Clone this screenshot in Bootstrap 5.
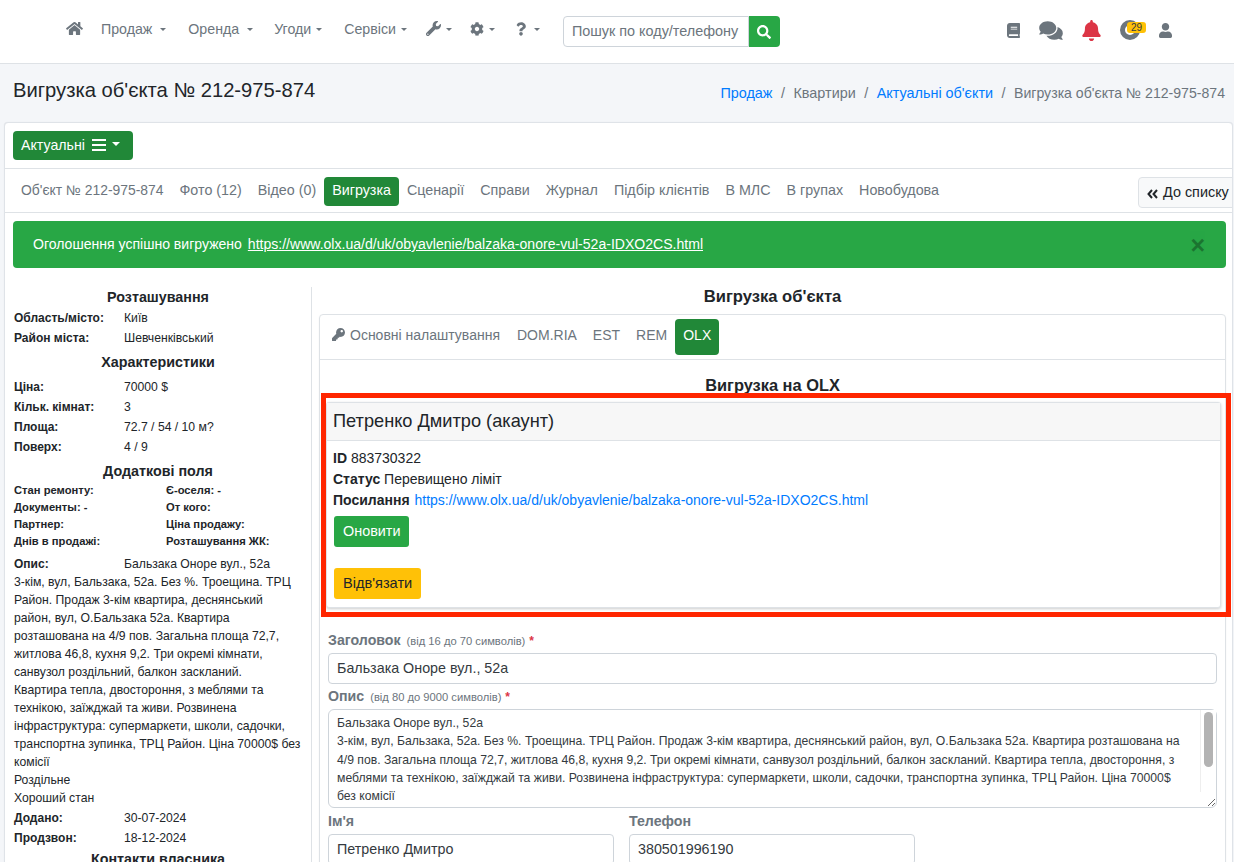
<!DOCTYPE html>
<html lang="uk">
<head>
<meta charset="utf-8">
<title>Вигрузка об'єкта</title>
<link rel="stylesheet" href="https://cdn.jsdelivr.net/npm/bootstrap@5.3.0/dist/css/bootstrap.min.css">
<style>
html,body{height:862px;overflow:hidden}
body{background:#f4f6f9;font-family:"Liberation Sans",Arial,sans-serif;font-size:14px;color:#212529;width:1234px}
.ti{fill:currentColor;display:inline-block;vertical-align:-2px}
.topbar{height:64px;background:#fff;border-bottom:1px solid #dee2e6;padding-left:66px;padding-right:62px}
.topnav{color:#6c757d;font-size:14.2px;text-decoration:none}
.topnav.dropdown-toggle::after{margin-left:5px;vertical-align:.2em;border-top-width:.27em;border-left-width:.25em;border-right-width:.25em}
.topnav.widecaret.dropdown-toggle::after{margin-left:8px}
.toplink{gap:20px;margin-bottom:4px}
.mrp1{margin-right:1px}
.mrp2{margin-right:2px}
.mrn1{margin-right:-1px}
.mrn2{margin-right:-2px}
.searchwrap{width:217px;height:31px;margin-left:23px}
.searchwrap .form-control{height:31px;font-size:14.4px;padding:3px 8px 5px;border-radius:4px 0 0 4px;border-color:#ced4da}
.searchwrap .form-control::placeholder{color:#6c757d}
.searchbtn{width:31px;height:31px;background:#28a745;border-radius:0 4px 4px 0;color:#fff}
.righticons{color:#6c757d;gap:19px;margin-bottom:3px}
.histicon{width:20px;height:20px}
.numbadge{position:absolute;top:2px;left:7px;width:19px;height:11px;background:#ffc107;color:#343a40;font-size:10px;line-height:11px;text-align:center;border-radius:3px}
.headbar{height:58px;padding:0 9px 0 13px}
.pagetitle{font-size:20.2px;font-weight:400;margin:0;color:#212529;position:relative;top:-3px}
.crumbs{font-size:14.4px;color:#6c757d;margin:0;gap:8.5px;position:relative;top:1px}
.crumbs a{color:#007bff;text-decoration:none}
.crumblast{font-size:14.1px}
.maincard{margin-left:4px;margin-right:1px;background:#fff;border:1px solid #dfe3e8;border-radius:4px;height:800px;overflow:hidden;box-shadow:0 0 1px rgba(0,0,0,.1)}
.cardhead{height:46px;padding:8px;border-bottom:1px solid #dee2e6}
.btnstate{background:#218838;color:#fff;font-size:14.2px;height:29px;width:120px;padding:0 8px;border-radius:4px;border:0;text-align:left;white-space:nowrap}
.btnstate svg{margin-left:7px}
.btnstate.dropdown-toggle::after{margin-left:6px}
.tabline{height:44px;padding:1px 8px 0;border-bottom:1px solid #dee2e6}
.tabitem{color:#6c757d;font-size:14.3px;text-decoration:none;padding:0 8px;height:29px;line-height:27px;border-radius:4px;white-space:nowrap}
.tabitem.sel{background:#218838;color:#fff}
.tabfirst{font-size:13.9px}
.backbtn{height:31px;width:110px;margin-left:auto;margin-right:-24px;background:#f8f9fa;border:1px solid #dee2e6;border-radius:4px;font-size:14.4px;color:#212529;padding:0 8px;line-height:29px;white-space:nowrap;flex:none;position:relative;top:1px}
.backbtn svg{margin-right:1px}
.okbar{background:#28a745;color:#fff;margin:8px 6px 0 8px;height:47px;border-radius:4px;padding:0 21px 0 20px;font-size:14.05px;border:0}
.okbar a{color:#fff;margin-left:2px}
.okclose{margin-left:auto;background:none;border:0;font-size:25px;font-weight:700;color:#000;opacity:.3;padding:0;margin-right:0;line-height:1;position:relative;top:1px}
.colsrow{padding-top:19px}
.leftcol{width:307px;flex:none;border-right:1px solid #dee2e6;padding:0 0 0 9px;height:600px;font-size:12.2px}
.sechead{font-size:14.3px;font-weight:700;text-align:center;height:20px;line-height:20px;padding-right:9px}
.sechead.tall{height:29px;line-height:30px}
.sechead.mid{height:24px;line-height:30px}
.sechead.last{height:24px;line-height:24px}
.inforow{height:20px;line-height:22px}
.inforow b{width:110px;flex:none;font-size:12px}
.extra{font-size:11.2px;font-weight:700;line-height:17px;padding-bottom:5px;padding-top:2px}
.extracell{width:152px}
.desc{line-height:18px;padding-right:0;white-space:nowrap}
.desc b{display:inline-block;width:110px;font-size:12px}
.rightcol{flex:1;min-width:0;padding:0 6px 0 7px}
.innertitle{font-size:16.6px;font-weight:700;text-align:center;height:27px;line-height:20px}
.innercard{border:1px solid #dee2e6;border-radius:4px;height:700px;box-shadow:0 1px 2px rgba(0,0,0,.05)}
.innertabs{height:45px;padding:4px 4px;border-bottom:1px solid #dee2e6}
.innertabs .tabitem{height:36px;line-height:33px;font-size:14px}
.keyic{vertical-align:-1px;margin-right:5px}
.olxtitle{font-size:16.4px;font-weight:700;text-align:center;height:35px;padding-top:16px;line-height:18px;margin-bottom:7px}
.panelwrap{position:relative;margin:0 4px 0 6px}
.panelbox{border:1px solid #dee2e6;border-radius:3px;box-shadow:0 1px 3px rgba(0,0,0,.2);background:#fff}
.panelhead{background:#f7f7f7;border-bottom:1px solid #dee2e6;height:38px;line-height:36px;padding:0 6px;font-size:18.2px}
.panelbody{padding:7px 6px;font-size:14px;line-height:21px;height:166px}
.panelbody a{color:#007bff;text-decoration:none;margin-left:1px}
.btngo,.btnoff{border:0;height:31px;padding:0 9px;border-radius:3px;display:block;margin-left:1px}
.btngo{background:#28a745;color:#fff;margin-top:5px;font-size:14.4px}
.btnoff{background:#ffc107;color:#212529;margin-top:21px;font-size:14.6px}
.redframe{position:absolute;left:-5px;top:-9px;right:-10px;bottom:-9px;border:5px solid #ff2600;pointer-events:none}
.formarea{padding:23px 8px 0 8px}
.flabel{font-size:14.2px;font-weight:700;color:#6c757d;line-height:18px;margin:0;display:block;height:22px}
.flabel small{font-size:11.2px;font-weight:400;margin-left:2px}
.flabel i{color:#dc3545;font-style:normal;font-size:12px}
.finput{height:31px;font-size:14.3px;padding:3px 8px 5px;border-color:#ced4da;border-radius:4px;color:#343a40;margin-bottom:3px}
.areawrap{position:relative;margin-bottom:4px;height:99px}
.farea{height:99px;font-size:12.2px;line-height:18.3px;padding:4px 26px 4px 8px;resize:both;overflow:hidden;color:#343a40;border-color:#ced4da}
.sctrack{position:absolute;top:1px;right:1px;bottom:16px;width:16px;background:#fff;border-left:1px solid #eee}
.scthumb{position:absolute;top:2px;left:3px;width:9px;height:55px;background:#b3b3b3;border-radius:5px}
.halfcol{width:286px}
.fgap{gap:15px}
</style>
</head>
<body>
<nav class="topbar d-flex align-items-center">
  <div class="d-flex align-items-center toplink">
    <a class="topnav mrn2" href="#"><svg class="ti" width="17" height="15" viewBox="0 0 576 512"><path d="M280.37 148.26L96 300.11V464a16 16 0 0 0 16 16l112.06-.29a16 16 0 0 0 15.92-16V368a16 16 0 0 1 16-16h64a16 16 0 0 1 16 16v95.64a16 16 0 0 0 16 16.05L464 480a16 16 0 0 0 16-16V300L295.67 148.26a12.19 12.19 0 0 0-15.3 0zM571.6 251.47L488 182.56V44.05a12 12 0 0 0-12-12h-56a12 12 0 0 0-12 12v72.61L318.47 43a48 48 0 0 0-61 0L4.34 251.47a12 12 0 0 0-1.6 16.9l25.5 31A12 12 0 0 0 45.15 301l235.22-193.74a12.19 12.19 0 0 1 15.3 0L530.9 301a12 12 0 0 0 16.9-1.6l25.5-31a12 12 0 0 0-1.7-16.93z"/></svg></a>
    <a class="topnav dropdown-toggle widecaret mrp2" href="#">Продаж</a>
    <a class="topnav dropdown-toggle widecaret mrp1" href="#">Оренда</a>
    <a class="topnav dropdown-toggle mrp2" href="#">Угоди</a>
    <a class="topnav dropdown-toggle mrn1" href="#">Сервіси</a>
    <a class="topnav dropdown-toggle mrn2" href="#"><svg class="ti" width="15" height="15" viewBox="0 0 512 512"><path d="M507.73 109.1c-2.24-9.03-13.54-12.09-20.12-5.51l-74.36 74.36-67.88-11.31-11.31-67.88 74.36-74.36c6.62-6.62 3.43-17.9-5.66-20.16-47.38-11.74-99.55.91-136.58 37.93-39.64 39.64-50.55 97.1-34.05 147.2L18.74 402.76c-24.99 24.99-24.99 65.51 0 90.5 24.99 24.99 65.51 24.99 90.5 0l213.21-213.21c50.12 16.71 107.47 5.68 147.37-34.22 37.07-37.07 49.7-89.32 37.91-136.73zM64 472c-13.25 0-24-10.75-24-24 0-13.26 10.75-24 24-24s24 10.74 24 24c0 13.25-10.75 24-24 24z"/></svg></a>
    <a class="topnav dropdown-toggle mrp1" href="#"><svg class="ti" width="14" height="14" viewBox="0 0 512 512"><path d="M487.4 315.7l-42.6-24.6c4.3-23.2 4.3-47 0-70.2l42.6-24.6c4.9-2.8 7.1-8.6 5.5-14-11.1-35.6-30-67.8-54.7-94.6-3.8-4.1-10-5.1-14.8-2.3L380.8 110c-17.9-15.4-38.5-27.3-60.8-35.1V25.8c0-5.6-3.9-10.5-9.4-11.7-36.7-8.2-74.3-7.8-109.2 0-5.5 1.2-9.4 6.1-9.4 11.7V75c-22.2 7.9-42.8 19.8-60.8 35.1L88.7 85.5c-4.9-2.8-11-1.9-14.8 2.3-24.7 26.7-43.6 58.9-54.7 94.6-1.7 5.4.6 11.2 5.5 14L67.3 221c-4.3 23.2-4.3 47 0 70.2l-42.6 24.6c-4.9 2.8-7.1 8.6-5.5 14 11.1 35.6 30 67.8 54.7 94.6 3.8 4.1 10 5.1 14.8 2.3l42.6-24.6c17.9 15.4 38.5 27.3 60.8 35.1v49.2c0 5.6 3.9 10.5 9.4 11.7 36.7 8.2 74.3 7.8 109.2 0 5.5-1.2 9.4-6.1 9.4-11.7v-49.2c22.2-7.9 42.8-19.8 60.8-35.1l42.6 24.6c4.9 2.8 11 1.9 14.8-2.3 24.7-26.7 43.6-58.9 54.7-94.6 1.5-5.5-.7-11.3-5.6-14.1zM256 336c-44.1 0-80-35.9-80-80s35.9-80 80-80 80 35.9 80 80-35.9 80-80 80z"/></svg></a>
    <a class="topnav dropdown-toggle widecaret" href="#"><svg class="ti" width="10" height="14" viewBox="0 0 384 512"><path d="M202.021 0C122.202 0 70.503 32.703 29.914 91.026c-7.363 10.58-5.093 25.086 5.178 32.874l43.138 32.709c10.373 7.865 25.132 6.026 33.253-4.148 25.049-31.381 43.63-49.449 82.757-49.449 30.764 0 68.816 19.799 68.816 49.631 0 22.552-18.617 34.134-48.993 51.164-35.423 19.86-82.299 44.576-82.299 106.405V320c0 13.255 10.745 24 24 24h72.471c13.255 0 24-10.745 24-24v-5.773c0-42.86 125.268-44.645 125.268-160.627C377.504 66.256 286.902 0 202.021 0zM192 373.459c-38.196 0-69.271 31.075-69.271 69.271 0 38.195 31.075 69.27 69.271 69.27s69.271-31.075 69.271-69.271-31.075-69.27-69.271-69.27z"/></svg></a>
  </div>
  <div class="searchwrap d-flex flex-none">
    <input class="form-control" placeholder="Пошук по коду/телефону">
    <span class="searchbtn d-flex align-items-center justify-content-center flex-shrink-0"><svg class="ti" width="14" height="14" viewBox="0 0 512 512"><path d="M505 442.7L405.3 343c-4.5-4.5-10.6-7-17-7H372c27.6-35.3 44-79.7 44-128C416 93.1 322.9 0 208 0S0 93.1 0 208s93.1 208 208 208c48.3 0 92.7-16.4 128-44v16.3c0 6.4 2.5 12.5 7 17l99.7 99.7c9.4 9.4 24.6 9.4 33.9 0l28.3-28.3c9.4-9.4 9.4-24.6.1-34zM208 336c-70.7 0-128-57.2-128-128 0-70.7 57.2-128 128-128 70.7 0 128 57.2 128 128 0 70.7-57.2 128-128 128z"/></svg></span>
  </div>
  <div class="righticons d-flex align-items-center ms-auto">
    <svg class="ti" width="13" height="15" viewBox="0 0 448 512"><path d="M448 360V24c0-13.3-10.7-24-24-24H96C43 0 0 43 0 96v320c0 53 43 96 96 96h328c13.3 0 24-10.7 24-24v-16c0-7.5-3.5-14.3-8.9-18.7-4.2-15.4-4.2-59.3 0-74.7 5.4-4.3 8.9-11.1 8.9-18.6zM128 134c0-3.3 2.7-6 6-6h212c3.3 0 6 2.7 6 6v20c0 3.3-2.7 6-6 6H134c-3.3 0-6-2.7-6-6v-20zm0 64c0-3.3 2.7-6 6-6h212c3.3 0 6 2.7 6 6v20c0 3.3-2.7 6-6 6H134c-3.3 0-6-2.7-6-6v-20zm253.4 250H96c-17.7 0-32-14.3-32-32 0-17.6 14.4-32 32-32h285.4c-1.9 17.1-1.9 46.9 0 64z"/></svg>
    <svg class="ti" width="24" height="21" viewBox="0 0 576 512"><path d="M416 192c0-88.4-93.1-160-208-160S0 103.6 0 192c0 34.3 14.1 65.9 38 92-13.4 30.2-35.5 54.2-35.8 54.5-2.2 2.3-2.8 5.7-1.5 8.7S4.8 352 8 352c36.6 0 66.9-12.3 88.7-25 32.2 15.7 70.3 25 111.3 25 114.9 0 208-71.6 208-160zm122 220c23.9-26 38-57.7 38-92 0-66.9-53.5-124.2-129.3-148.1.9 6.6 1.3 13.3 1.3 20.1 0 105.9-107.7 192-240 192-10.8 0-21.3-.8-31.7-1.9C207.8 439.6 281.8 480 368 480c41 0 79.1-9.2 111.3-25 21.8 12.7 52.1 25 88.7 25 3.2 0 6.1-1.9 7.3-4.8 1.3-2.9.7-6.3-1.5-8.7-.3-.3-22.4-24.2-35.8-54.5z"/></svg>
    <svg class="ti text-danger" width="19" height="21" viewBox="0 0 448 512"><path d="M224 512c35.32 0 63.97-28.65 63.97-64H160.03c0 35.35 28.65 64 63.97 64zm215.39-149.71c-19.32-20.76-55.47-51.99-55.47-154.29 0-77.7-54.48-139.9-127.94-155.16V32c0-17.67-14.32-32-31.98-32s-31.98 14.33-31.98 32v20.84C118.56 68.1 64.08 130.3 64.08 208c0 102.3-36.15 133.53-55.47 154.29-6 6.45-8.66 14.16-8.61 21.71.11 16.4 12.98 32 32.1 32h383.8c19.12 0 32-15.6 32.1-32 .05-7.55-2.61-15.27-8.61-21.71z"/></svg>
    <span class="position-relative d-inline-block histicon"><svg class="ti" width="20" height="20" viewBox="0 0 20 20"><circle cx="10" cy="10" r="7.500" fill="none" stroke="currentColor" stroke-width="5"/></svg><span class="numbadge">29</span></span>
    <svg class="ti" width="13" height="15" viewBox="0 0 448 512"><path d="M224 256c70.7 0 128-57.3 128-128S294.7 0 224 0 96 57.3 96 128s57.3 128 128 128zm89.6 32h-16.7c-22.2 10.2-46.9 16-72.9 16s-50.6-5.8-72.9-16h-16.7C60.2 288 0 348.2 0 422.4V464c0 26.5 21.5 48 48 48h352c26.5 0 48-21.5 48-48v-41.6c0-74.2-60.2-134.4-134.4-134.4z"/></svg>
  </div>
</nav>
<header class="headbar d-flex align-items-center justify-content-between">
  <h1 class="pagetitle">Вигрузка об'єкта № 212-975-874</h1>
  <div class="crumbs d-flex align-items-center"><a href="#">Продаж</a><span>/</span><span>Квартири</span><span>/</span><a href="#">Актуальні об'єкти</a><span>/</span><span class="crumblast">Вигрузка об'єкта № 212-975-874</span></div>
</header>
<main class="maincard">
  <div class="cardhead">
    <button class="btnstate dropdown-toggle">Актуальні<svg class="ti" width="14" height="14" viewBox="0 0 14 14"><rect y="1" width="14" height="2"/><rect y="6" width="14" height="2"/><rect y="11" width="14" height="2"/></svg></button>
  </div>
  <div class="tabline d-flex align-items-center">
    <a class="tabitem tabfirst" href="#">Об'єкт № 212-975-874</a>
    <a class="tabitem" href="#">Фото (12)</a>
    <a class="tabitem" href="#">Відео (0)</a>
    <a class="tabitem sel" href="#">Вигрузка</a>
    <a class="tabitem" href="#">Сценарії</a>
    <a class="tabitem" href="#">Справи</a>
    <a class="tabitem" href="#">Журнал</a>
    <a class="tabitem" href="#">Підбір клієнтів</a>
    <a class="tabitem" href="#">В МЛС</a>
    <a class="tabitem" href="#">В групах</a>
    <a class="tabitem" href="#">Новобудова</a>
    <a class="backbtn text-decoration-none" href="#"><svg class="ti" width="11" height="10" viewBox="0 0 11 10"><path d="M5 1 1.500 5 5 9M10 1 6.500 5 10 9" fill="none" stroke="currentColor" stroke-width="2"/></svg> До списку</a>
  </div>
  <div class="okbar d-flex align-items-center">
    <span>Оголошення успішно вигружено <a href="#">https://www.olx.ua/d/uk/obyavlenie/balzaka-onore-vul-52a-IDXO2CS.html</a></span>
    <button class="okclose">×</button>
  </div>
  <div class="colsrow d-flex">
    <aside class="leftcol">
      <div class="sechead">Розташування</div>
      <div class="inforow d-flex"><b>Область/місто:</b><span>Київ</span></div>
      <div class="inforow d-flex"><b>Район міста:</b><span>Шевченківський</span></div>
      <div class="sechead tall">Характеристики</div>
      <div class="inforow d-flex"><b>Ціна:</b><span>70000 $</span></div>
      <div class="inforow d-flex"><b>Кільк. кімнат:</b><span>3</span></div>
      <div class="inforow d-flex"><b>Площа:</b><span>72.7 / 54 / 10 м?</span></div>
      <div class="inforow d-flex"><b>Поверх:</b><span>4 / 9</span></div>
      <div class="sechead mid">Додаткові поля</div>
      <div class="extra">
        <div class="d-flex"><div class="extracell">Стан ремонту:</div><div>Є-оселя: -</div></div>
        <div class="d-flex"><div class="extracell">Документы: -</div><div>От кого:</div></div>
        <div class="d-flex"><div class="extracell">Партнер:</div><div>Ціна продажу:</div></div>
        <div class="d-flex"><div class="extracell">Днів в продажі:</div><div>Розташування ЖК:</div></div>
      </div>
      <div class="desc"><b>Опис:</b>Бальзака Оноре вул., 52а<br>3-кім, вул, Бальзака, 52а. Без %. Троещина. ТРЦ<br>Район. Продаж 3-кім квартира, деснянський<br>район, вул, О.Бальзака 52а. Квартира<br>розташована на 4/9 пов. Загальна площа 72,7,<br>житлова 46,8, кухня 9,2. Три окремі кімнати,<br>санвузол роздільний, балкон заскланий.<br>Квартира тепла, двостороння, з меблями та<br>технікою, заїжджай та живи. Розвинена<br>інфраструктура: супермаркети, школи, садочки,<br>транспортна зупинка, ТРЦ Район. Ціна 70000$ без<br>комісії<br>Роздільне<br>Хороший стан</div>
      <div class="inforow d-flex"><b>Додано:</b><span>30-07-2024</span></div>
      <div class="inforow d-flex"><b>Продзвон:</b><span>18-12-2024</span></div>
      <div class="sechead last">Контакти власника</div>
    </aside>
    <section class="rightcol">
      <div class="innertitle">Вигрузка об'єкта</div>
      <div class="innercard">
        <div class="innertabs d-flex align-items-center">
          <a class="tabitem mrp1" href="#"><svg class="ti keyic" width="13" height="13" viewBox="0 0 512 512"><path d="M512 176.001C512 273.203 433.202 352 336 352c-11.22 0-22.19-1.062-32.827-3.069l-24.012 27.014A23.999 23.999 0 0 1 261.223 384H224v40c0 13.255-10.745 24-24 24h-40v40c0 13.255-10.745 24-24 24H24c-13.255 0-24-10.745-24-24v-78.059c0-6.365 2.529-12.47 7.029-16.971l161.802-161.802C163.108 213.814 160 195.271 160 176 160 78.798 238.797.001 335.999 0 433.488-.001 512 78.511 512 176.001zM336 128c0 26.51 21.49 48 48 48s48-21.49 48-48-21.49-48-48-48-48 21.49-48 48z"/></svg>Основні налаштування</a>
          <a class="tabitem" href="#">DOM.RIA</a>
          <a class="tabitem" href="#">EST</a>
          <a class="tabitem" href="#">REM</a>
          <a class="tabitem sel" href="#">OLX</a>
        </div>
        <div class="olxtitle">Вигрузка на OLX</div>
        <div class="panelwrap">
          <div class="panelbox">
            <div class="panelhead">Петренко Дмитро (акаунт)</div>
            <div class="panelbody">
              <div><b>ID</b> 883730322</div>
              <div><b>Статус</b> Перевищено ліміт</div>
              <div><b>Посилання</b> <a href="#">https://www.olx.ua/d/uk/obyavlenie/balzaka-onore-vul-52a-IDXO2CS.html</a></div>
              <button class="btngo">Оновити</button>
              <button class="btnoff">Відв'язати</button>
            </div>
          </div>
          <div class="redframe"></div>
        </div>
        <div class="formarea">
          <label class="flabel">Заголовок <small>(від 16 до 70 символів)</small> <i>*</i></label>
          <input class="form-control finput" value="Бальзака Оноре вул., 52а">
          <label class="flabel">Опис <small>(від 80 до 9000 символів)</small> <i>*</i></label>
          <div class="areawrap">
            <textarea class="form-control farea">Бальзака Оноре вул., 52а
3-кім, вул, Бальзака, 52а. Без %. Троещина. ТРЦ Район. Продаж 3-кім квартира, деснянський район, вул, О.Бальзака 52а. Квартира розташована на 4/9 пов. Загальна площа 72,7, житлова 46,8, кухня 9,2. Три окремі кімнати, санвузол роздільний, балкон заскланий. Квартира тепла, двостороння, з меблями та технікою, заїжджай та живи. Розвинена інфраструктура: супермаркети, школи, садочки, транспортна зупинка, ТРЦ Район. Ціна 70000$ без комісії
Роздільне
Хороший стан</textarea>
            <div class="sctrack"><div class="scthumb"></div></div>
          </div>
          <div class="d-flex fgap">
            <div class="halfcol"><label class="flabel">Ім'я</label><input class="form-control finput" value="Петренко Дмитро"></div>
            <div class="halfcol"><label class="flabel">Телефон</label><input class="form-control finput" value="380501996190"></div>
          </div>
        </div>
      </div>
    </section>
  </div>
</main>
<script src="https://cdn.jsdelivr.net/npm/bootstrap@5.3.0/dist/js/bootstrap.bundle.min.js"></script>
</body>
</html>
